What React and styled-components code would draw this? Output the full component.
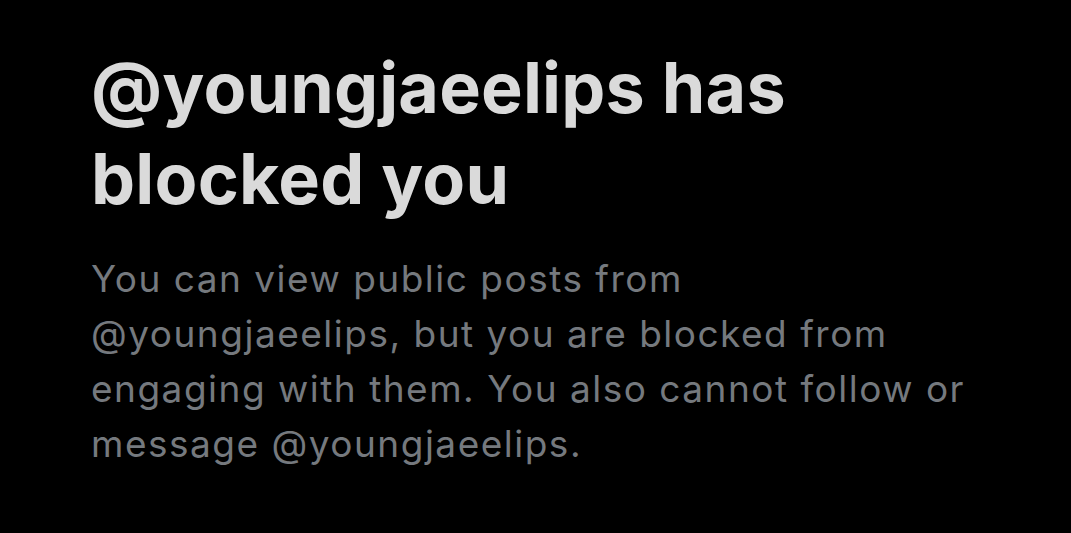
import React from 'react';
import styled, { createGlobalStyle } from 'styled-components';

const Global = createGlobalStyle`
    html, body {
        margin: 0;
        padding: 0;
        background: #000000;
    }
`;

const Page = styled.div`
    width: 1071px;
    height: 533px;
    background: #000000;
    box-sizing: border-box;
    padding: 42px 60px 0 91px;
    overflow: hidden;
`;

const Box = styled.div`
    width: 910px;
    display: flex;
    flex-direction: column;
    gap: 27px;
`;

const Title = styled.h1`
    margin: 0;
    font-family: Inter, "Liberation Sans", sans-serif;
    font-weight: 700;
    font-size: 70px;
    line-height: 91px;
    letter-spacing: 0.2px;
    color: #dadada;
`;

const Text = styled.p`
    margin: 0;
    font-family: Inter, "Liberation Sans", sans-serif;
    font-weight: 400;
    font-size: 37px;
    line-height: 55px;
    letter-spacing: 1.5px;
    color: #75797e;
`;

export default function App() {
    return (
        <Page>
            <Global />
            <Box>
                <Title>@youngjaeelips has blocked you</Title>
                <Text>
                    You can view public posts from @youngjaeelips, but you are blocked from
                    engaging with them. You also cannot follow or message @youngjaeelips.
                </Text>
            </Box>
        </Page>
    );
}
